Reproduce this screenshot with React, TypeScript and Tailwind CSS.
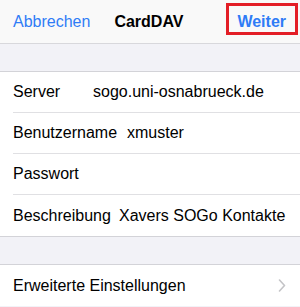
const font = { fontFamily: '"Liberation Sans", Arial, sans-serif' };

type Field = { label: string; value: string; labelWidth: string };

const fields: Field[] = [
  { label: "Server", value: "sogo.uni-osnabrueck.de", labelWidth: "w-[80px]" },
  { label: "Benutzername", value: "xmuster", labelWidth: "w-[114px]" },
  { label: "Passwort", value: "", labelWidth: "w-[106px]" },
  { label: "Beschreibung", value: "Xavers SOGo Kontakte", labelWidth: "w-[106px]" },
];

function FieldRow({ field, last }: { field: Field; last: boolean }) {
  return (
    <div className="pl-[13px] bg-white">
      <div
        className={
          "flex h-[41px] items-center text-[16px] text-black " +
          (last ? "" : "border-b border-[#e0e0e3]")
        }
      >
        <span className={"shrink-0 whitespace-nowrap " + field.labelWidth}>{field.label}</span>
        <span className="whitespace-nowrap">{field.value}</span>
      </div>
    </div>
  );
}

export default function App() {
  return (
    <div className="w-[300px] h-[307px] overflow-hidden bg-[#f2f2f7]" style={font}>
      <header className="relative flex h-[44px] items-center border-b border-[#d8d8dc] bg-[#f9f9f9] px-[13px] text-[16px]">
        <span className="text-[#2f7cf6]">Abbrechen</span>
        <span className="ml-[24px] font-bold text-black">CardDAV</span>
        <span className="ml-auto mr-[1px] font-bold text-[#2f7cf6]">Weiter</span>
        <div className="absolute left-[226px] top-[3px] h-[32px] w-[72px] border-[3px] border-[#e31e26]" />
      </header>

      <div className="h-[28px] border-b border-[#d3d3d8]" />

      <section className="border-b border-[#d3d3d8] bg-white">
        {fields.map((f, i) => (
          <FieldRow key={f.label} field={f} last={i === fields.length - 1} />
        ))}
      </section>

      <div className="h-[28px] border-b border-[#d3d3d8]" />

      <div className="flex h-[41px] items-center bg-white pl-[13px] pr-[14px] text-[16px] text-black">
        <span>Erweiterte Einstellungen</span>
        <svg className="ml-auto" width="8" height="13" viewBox="0 0 8 13" fill="none">
          <path d="M1.5 1 L6.5 6.5 L1.5 12" stroke="#c4c4c7" strokeWidth="1.6" strokeLinecap="round" strokeLinejoin="round" />
        </svg>
      </div>
    </div>
  );
}
